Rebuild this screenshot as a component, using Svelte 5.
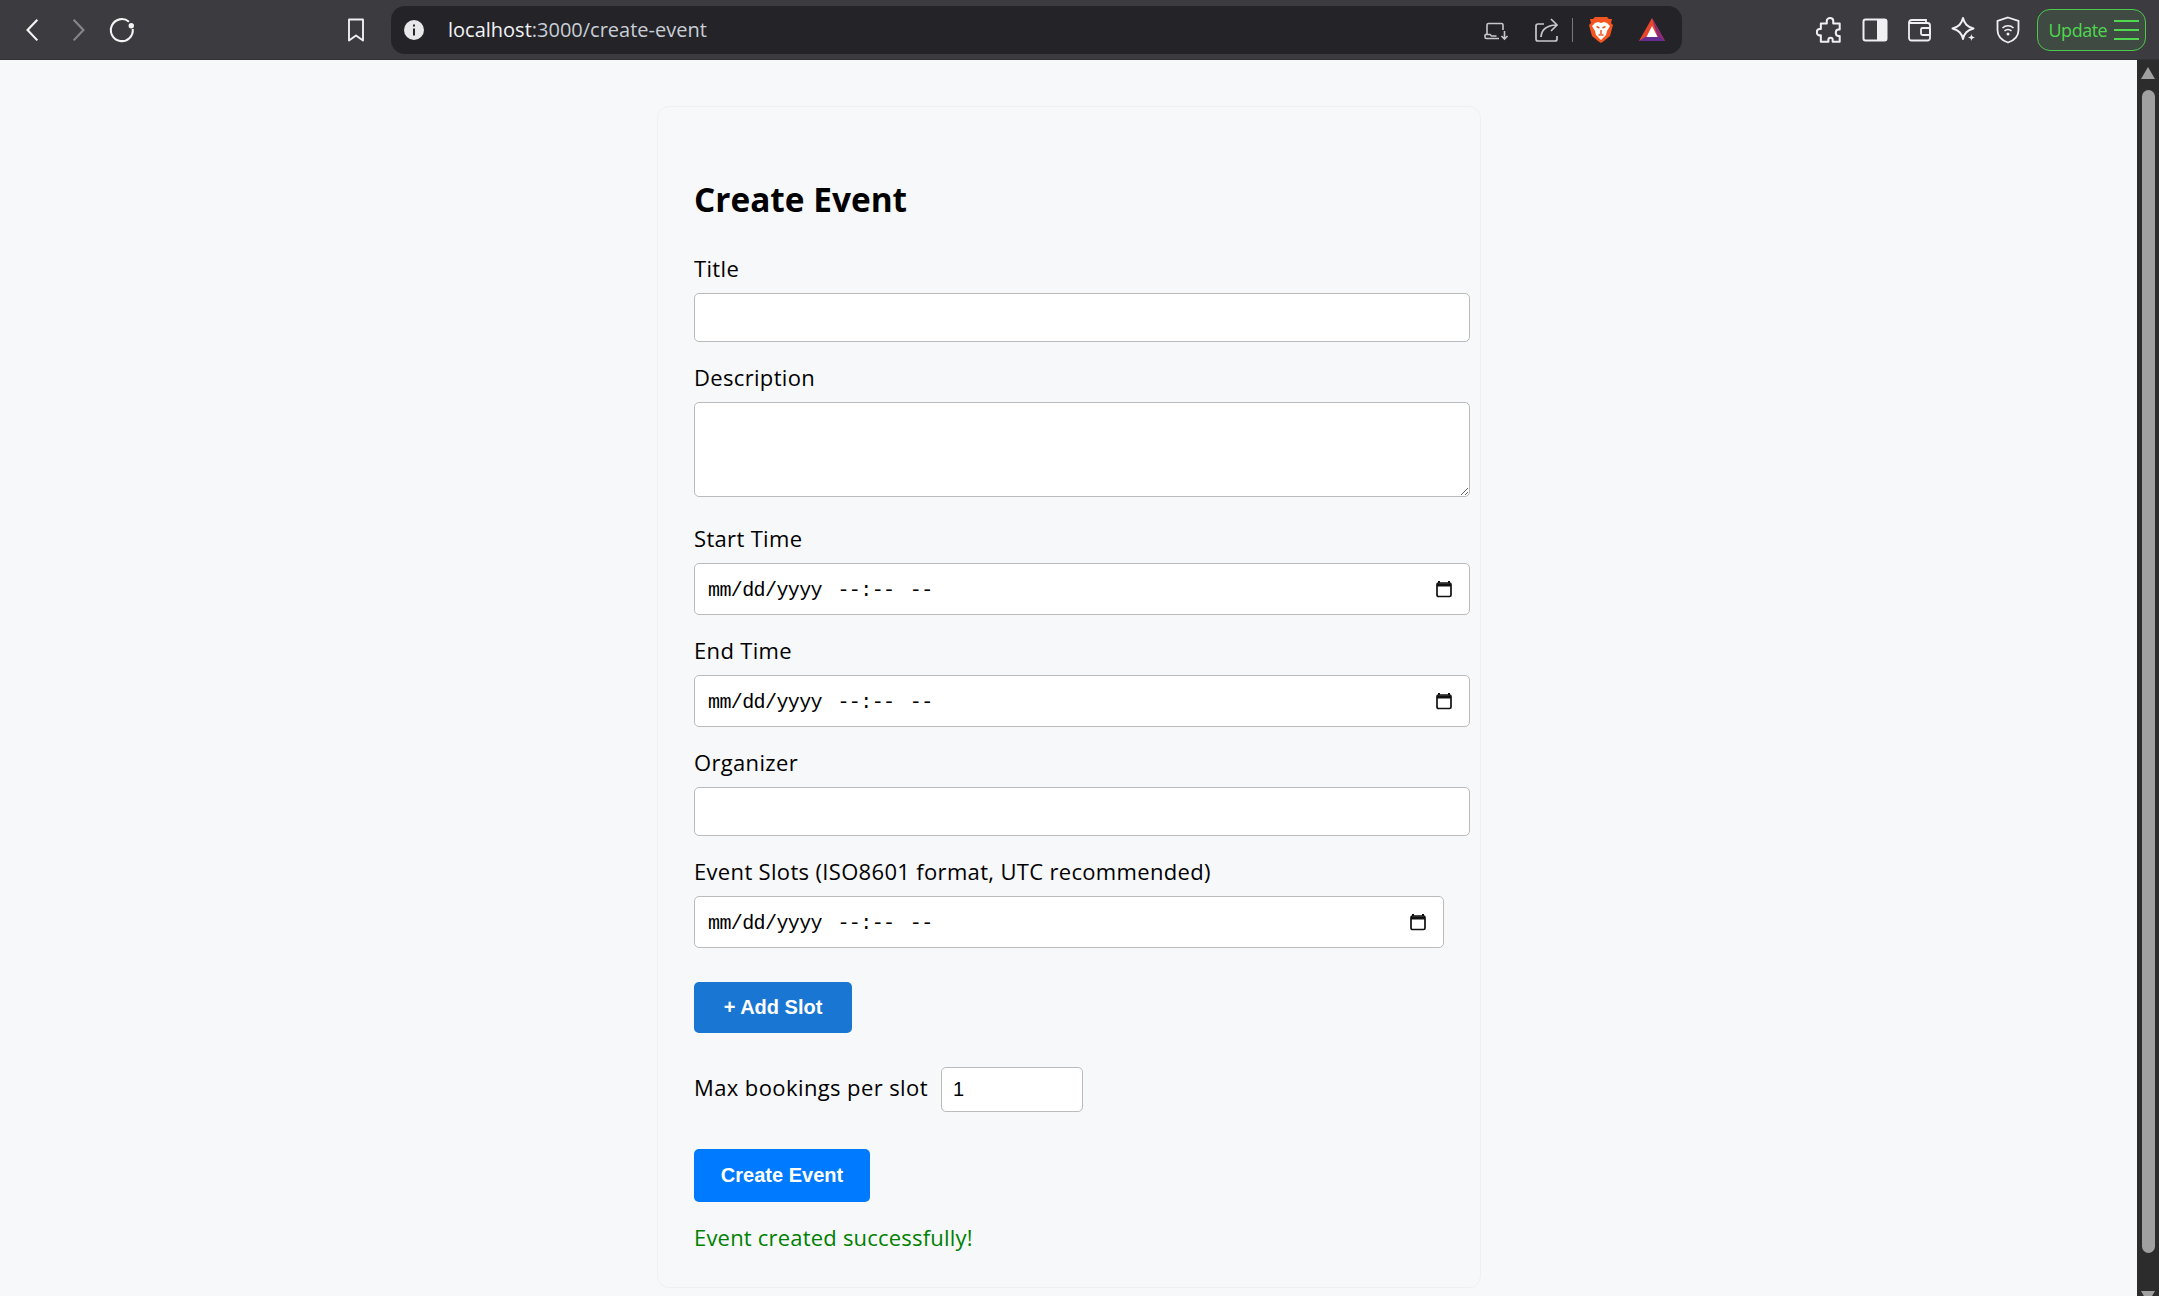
<script>
  const dateText = "mm/dd/yyyy --:-- --";
</script>

{#snippet calendar()}
  <svg class="cal" viewBox="0 0 18 18" width="18" height="18" aria-hidden="true">
    <path d="M4 1v2M14 1v2" stroke="#111" stroke-width="2" fill="none" />
    <rect x="2" y="3" width="14" height="13.5" rx="1.5" fill="none" stroke="#111" stroke-width="1.7" />
    <path d="M2 3.5h14v3H2z" fill="#111" />
  </svg>
{/snippet}

{#snippet dateField(short = false)}
  <div class="date-field" class:short>
    <span class="date-text">{dateText}</span>
    {@render calendar()}
  </div>
{/snippet}

<div class="browser">
  <header class="toolbar">
    <div class="nav">
      <button class="tool" aria-label="Back">
        <svg viewBox="0 0 24 24" width="26" height="26"><path d="M16 3.5 7 13l9 9.5" fill="none" stroke="#f4f4f5" stroke-width="2" /></svg>
      </button>
      <button class="tool" aria-label="Forward">
        <svg viewBox="0 0 24 24" width="26" height="26"><path d="M8 3.5 17 13l-9 9.5" fill="none" stroke="#85858a" stroke-width="2" /></svg>
      </button>
      <button class="tool" aria-label="Reload">
        <svg viewBox="0 0 26 26" width="28" height="28"><path d="M19.5 6.3A10.2 10.2 0 1 0 23 13" fill="none" stroke="#f4f4f5" stroke-width="1.9" /><circle cx="21.6" cy="10" r="2.5" fill="#f4f4f5" /></svg>
      </button>
    </div>
    <button class="tool bookmark" aria-label="Bookmark">
      <svg viewBox="0 0 20 26" width="20" height="26"><path d="M3 2.5h14v21l-7-5-7 5z" fill="none" stroke="#f0f0f2" stroke-width="1.9" stroke-linejoin="round" /></svg>
    </button>
    <div class="urlbar">
      <svg class="info" viewBox="0 0 20 20" width="20" height="20"><circle cx="10" cy="10" r="10" fill="#e8e8ea" /><path d="M10 4.500v2M10 8.500v7" stroke="#26262a" stroke-width="2" /></svg>
      <span class="url"><span class="host">localhost</span>:3000/create-event</span>
      <div class="url-actions">
        <svg class="cast" viewBox="0 0 26 24" width="26" height="24"><path d="M4 16V7a1.500 1.500 0 0 1 1.500-1.500h13A1.500 1.500 0 0 1 20 7v5M2 16.500v2.500a1.500 1.500 0 0 0 1.500 1.500H16M2 16.500h5l1.500 1.500h5" fill="none" stroke="#c8c8cc" stroke-width="1.600" /><path d="M21.500 13v8M18.500 18l3 3 3-3" fill="none" stroke="#c8c8cc" stroke-width="1.600" /></svg>
        <svg class="share" viewBox="0 0 26 26" width="26" height="26"><path d="M11 7H5a2 2 0 0 0-2 2v13a2 2 0 0 0 2 2h17a2 2 0 0 0 2-2v-3" fill="none" stroke="#c8c8cc" stroke-width="1.700" /><path d="M8 20c.5-7 5-11.500 15-12M18 2l6 6-6 6" fill="none" stroke="#c8c8cc" stroke-width="1.700" /></svg>
        <span class="sep"></span>
        <svg class="brave" viewBox="0 0 24 28" width="24" height="28"><path d="M6 1h12l2 2 3 0-1 4 2 2-3 11-6 5-3 2-3-2-6-5L0 9l2-2-1-4 3 0z" fill="#f4541f" /><path d="M6 7l3-1 3 1 3-1 3 1 3 3-3 5-1 4-5 5-5-5-1-4-3-5z" fill="#fff" /><path d="M7.500 10.500l3 1.500M16.500 10.500l-3 1.500M12 14v4M9.500 19h5" stroke="#f4541f" stroke-width="1.500" fill="none" /></svg>
        <svg class="bat" viewBox="0 0 28 26" width="28" height="26"><path d="M14 1 27 24H1z" fill="#e8452c" /><path d="M14 1 27 24h-6z" fill="#8b2a7d" /><path d="M1 24l6-4h14l6 4z" fill="#662d91" /><path d="M14 9l5.500 11h-11z" fill="#fff" /></svg>
      </div>
    </div>
    <div class="extensions">
      <button class="tool" aria-label="Extensions">
        <svg viewBox="0 0 26 26" width="28" height="28"><path d="M10 4.500c0-3.500 6-3.500 6 0V7h6v5.500h-1c-3.500 0-3.500 6 0 6h1V24h-6.500v-2c0-2.500-4-2.500-4 0v2H4.500v-6H3c-3-.5-3-5.500 0-6h1.500V7H10z" fill="none" stroke="#f0f0f2" stroke-width="1.900" stroke-linejoin="round" /></svg>
      </button>
      <button class="tool" aria-label="Sidebar">
        <svg viewBox="0 0 26 24" width="26" height="24"><rect x="1.500" y="1.500" width="23" height="21" rx="2" fill="none" stroke="#f0f0f2" stroke-width="2" /><rect x="15" y="1.500" width="9.500" height="21" fill="#f0f0f2" /></svg>
      </button>
      <button class="tool" aria-label="Wallet">
        <svg viewBox="0 0 26 26" width="26" height="26"><path d="M3 6a3 3 0 0 1 3-3h14v3M3 6v15a2.500 2.500 0 0 0 2.500 2.500h16a2.500 2.500 0 0 0 2.500-2.500V8.500A2.500 2.500 0 0 0 21.500 6z" fill="none" stroke="#f0f0f2" stroke-width="1.800" /><rect x="15" y="11" width="9" height="7" rx="1.500" fill="none" stroke="#f0f0f2" stroke-width="1.800" /></svg>
      </button>
      <button class="tool" aria-label="Leo">
        <svg viewBox="0 0 26 28" width="26" height="28"><path d="M12 2c1.500 6 4 8.500 10.500 10.500C16 14.500 13.500 17 12 23c-1.500-6-4-8.500-10.500-10.500C8 10.500 10.500 8 12 2z" fill="none" stroke="#f0f0f2" stroke-width="2" stroke-linejoin="round" /><path d="M20.500 18c.4 2.300 1.200 3.100 3.500 3.500-2.300.4-3.100 1.200-3.500 3.500-.4-2.300-1.200-3.100-3.500-3.500 2.300-.4 3.100-1.200 3.500-3.500z" fill="#f0f0f2" /></svg>
      </button>
      <button class="tool" aria-label="VPN">
        <svg viewBox="0 0 24 28" width="24" height="28"><path d="M12 1.500 22.500 5v9c0 6-4.500 10.500-10.500 12.500C6 24.500 1.500 20 1.500 14V5z" fill="none" stroke="#f0f0f2" stroke-width="1.800" /><path d="M6.500 12a8 8 0 0 1 11 0M8.500 15a5 5 0 0 1 7 0" fill="none" stroke="#f0f0f2" stroke-width="1.600" /><circle cx="12" cy="18" r="1.500" fill="#f0f0f2" /></svg>
      </button>
    </div>
    <button class="update">
      <span>Update</span>
      <span class="bars"><i></i><i></i><i></i></span>
    </button>
  </header>

  <div class="viewport">
    <main class="page">
      <form class="card" on:submit|preventDefault>
        <h2>Create Event</h2>

        <label class="field-label" for="title">Title</label>
        <input id="title" class="text-input" type="text" />

        <label class="field-label" for="description">Description</label>
        <textarea id="description" class="text-input area"></textarea>

        <div class="field-label">Start Time</div>
        {@render dateField()}

        <div class="field-label">End Time</div>
        {@render dateField()}

        <label class="field-label" for="organizer">Organizer</label>
        <input id="organizer" class="text-input" type="text" />

        <div class="field-label">Event Slots (ISO8601 format, UTC recommended)</div>
        {@render dateField(true)}

        <button type="button" class="add-slot">+ Add Slot</button>

        <div class="max-row">
          <label for="max">Max bookings per slot</label>
          <input id="max" class="max-input" type="text" value="1" />
        </div>

        <button type="submit" class="submit">Create Event</button>

        <p class="success">Event created successfully!</p>
      </form>
    </main>
    <aside class="scrollbar">
      <span class="arrow up"></span>
      <span class="thumb"></span>
      <span class="arrow down"></span>
    </aside>
  </div>
</div>

<style>
  :global(body) {
    margin: 0;
    overflow: hidden;
  }
  .browser {
    width: 2159px;
    height: 1296px;
    display: flex;
    flex-direction: column;
    overflow: hidden;
    font-family: "Open Sans", "Noto Sans", sans-serif;
  }
  .toolbar {
    height: 60px;
    box-sizing: border-box;
    flex: none;
    display: flex;
    align-items: center;
    padding-left: 11px;
    background: #3b3b40;
    border-bottom: 1px solid #333337;
  }
  .tool {
    width: 44.5px;
    height: 44px;
    padding: 0;
    border: 0;
    background: none;
    display: flex;
    align-items: center;
    justify-content: center;
  }
  .nav {
    display: flex;
    margin-top: -2px;
  }
  .bookmark {
    margin-left: 189px;
    margin-right: 13px;
  }
  .urlbar {
    width: 1291px;
    height: 48px;
    box-sizing: border-box;
    display: flex;
    align-items: center;
    padding-left: 13px;
    background: #242428;
    border-radius: 14px;
  }
  .url {
    margin-left: 24px;
    color: #c9cdd6;
    font-size: 20px;
  }
  .host {
    color: #f2f3f5;
  }
  .url-actions {
    margin-left: auto;
    margin-right: 16px;
    display: flex;
    align-items: center;
  }
  .cast {
    margin-right: 24px;
  }
  .sep {
    width: 1px;
    height: 24px;
    margin: 0 16px 0 13px;
    background: #77777c;
  }
  .bat {
    margin-left: 25px;
  }
  .extensions {
    margin-left: 126px;
    display: flex;
  }
  .update {
    margin-left: 6px;
    width: 109px;
    height: 42px;
    padding: 0 6px 0 11px;
    box-sizing: border-box;
    display: flex;
    align-items: center;
    justify-content: space-between;
    color: #4fd84f;
    font-family: inherit;
    font-size: 18px;
    letter-spacing: -0.5px;
    background: #3f4a42;
    border: 1.5px solid #4cc94c;
    border-radius: 13px;
  }
  .bars {
    display: flex;
    flex-direction: column;
    gap: 7px;
    width: 25px;
  }
  .bars i {
    display: block;
    height: 2px;
    background: #4fd84f;
  }
  .viewport {
    flex: 1;
    min-height: 0;
    display: flex;
  }
  .page {
    flex: 1;
    min-width: 0;
    background: #f7f8fa;
    padding-left: 657px;
    padding-top: 46px;
  }
  .scrollbar {
    position: relative;
    width: 22px;
    flex: none;
    background: #2c2c2c;
  }
  .thumb {
    position: absolute;
    left: 5px;
    top: 30px;
    width: 13px;
    height: 1163px;
    background: #a0a0a0;
    border-radius: 7px;
  }
  .arrow {
    position: absolute;
    left: 4px;
    width: 0;
    height: 0;
    border-left: 7.5px solid transparent;
    border-right: 7.5px solid transparent;
  }
  .arrow.up {
    top: 7px;
    border-bottom: 12px solid #a0a0a0;
  }
  .arrow.down {
    top: 1231px;
    border-top: 12px solid #a0a0a0;
  }
  .card {
    width: 824px;
    box-sizing: border-box;
    height: 1182px;
    padding: 68px 36px 0;
    background: #f7f8fa;
    border: 1px solid #eef0f3;
    border-radius: 12px;
  }
  h2 {
    margin: 0 0 30px;
    height: 48px;
    font-size: 33.4px;
    line-height: 48px;
    font-weight: 700;
    color: #000;
  }
  .field-label {
    display: block;
    height: 30px;
    margin: 20px 0 10px;
    font-size: 22px;
    letter-spacing: 0.33px;
    line-height: 30px;
    color: #000;
  }
  h2 + .field-label {
    margin-top: 0;
  }
  .text-input {
    display: block;
    width: 100%;
    box-sizing: content-box;
    height: 47px;
    padding: 0 12px;
    border: 1px solid #bbbbbb;
    border-radius: 5px;
    background: #fff;
    font-size: 20px;
    outline: none;
  }
  .area {
    height: 93px;
    margin-bottom: 26px;
  }
  .area + .field-label {
    margin-top: 0;
  }
  .date-field {
    width: 776px;
    height: 52px;
    box-sizing: border-box;
    display: flex;
    align-items: center;
    justify-content: space-between;
    padding: 0 16px 0 13px;
    border: 1px solid #bbbbbb;
    border-radius: 5px;
    background: #fff;
  }
  .date-field.short {
    width: 750px;
  }
  .date-text {
    padding-top: 2px;
    font-family: "Liberation Mono", monospace;
    font-size: 20px;
    letter-spacing: -0.6px;
    word-spacing: 4px;
    white-space: pre;
    color: #000;
  }
  .add-slot,
  .submit {
    display: block;
    padding: 0;
    border: 0;
    color: #fff;
    font-family: "Liberation Sans", Arial, sans-serif;
    font-weight: 700;
    font-size: 20px;
  }
  .add-slot {
    width: 158px;
    height: 51px;
    margin-top: 34px;
    background: #1976d2;
    border-radius: 5px;
  }
  .submit {
    width: 176px;
    height: 53px;
    margin-top: 37px;
    background: #007bff;
    border-radius: 5px;
  }
  .max-row {
    display: flex;
    align-items: center;
    gap: 13px;
    margin-top: 34px;
    font-size: 22px;
    letter-spacing: 0.4px;
    color: #000;
  }
  .max-row label {
    padding-bottom: 5px;
  }
  .max-input {
    width: 142px;
    height: 45px;
    box-sizing: border-box;
    padding: 0 11px;
    border: 1px solid #bbbbbb;
    border-radius: 5px;
    background: #fff;
    font-family: "Liberation Sans", Arial, sans-serif;
    font-size: 20px;
    color: #000;
    outline: none;
  }
  .success {
    margin: 20px 0 0;
    font-size: 22px;
    letter-spacing: 0.2px;
    line-height: 30px;
    color: #008000;
  }
</style>
